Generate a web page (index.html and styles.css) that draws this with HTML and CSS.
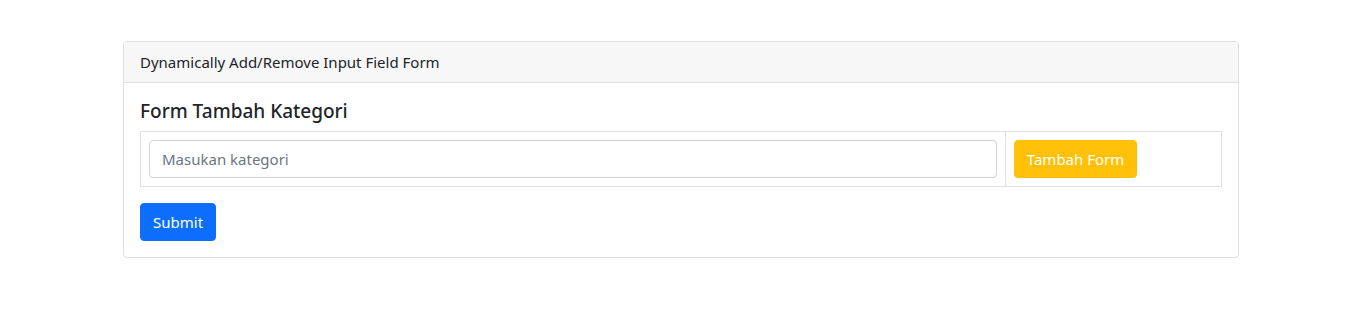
FILE: index.html
```html
<!DOCTYPE html>
<html lang="en">

<head>
    <meta charset="UTF-8">
    <meta name="viewport" content="width=device-width, initial-scale=1.0">
    <title>Dynamically Add/Remove Input Field</title>
    <link rel="stylesheet" href="styles.css">
</head>

<body>
    <div class="container">
        <div class="card">
            <div class="card-header">Dynamically Add/Remove Input Field Form</div>
            <div class="card-body">
                <h5 class="card-title">Form Tambah Kategori</h5>
                <form>
                    <table class="table-bordered">
                        <tr>
                            <td class="col-input"><input type="text" class="form-control" placeholder="Masukan kategori"></td>
                            <td><button type="button" class="btn btn-warning">Tambah Form</button></td>
                        </tr>
                    </table>
                    <button type="submit" class="btn btn-primary">Submit</button>
                </form>
            </div>
        </div>
    </div>
</body>

</html>
```

FILE: styles.css
```css
* {
    box-sizing: border-box;
}

body {
    margin: 0;
    font-family: "Noto Sans", "Open Sans", sans-serif;
    font-size: 16px;
    line-height: 1.5;
    color: #212529;
    background-color: #fff;
}

.container {
    max-width: 1140px;
    margin: 0 auto;
    padding: 41px 13px 0 11px;
}

.card {
    border: 1px solid #dfdfdf;
    border-radius: 4px;
    background-color: #fff;
}

.card-header {
    padding: 8px 16px;
    background-color: #f7f7f7;
    border-bottom: 1px solid #dfdfdf;
    border-radius: 3px 3px 0 0;
    font-size: 15px;
    line-height: 24px;
}

.card-body {
    padding: 16px;
}

.card-title {
    margin: 0 0 8px;
    font-size: 19px;
    font-weight: 500;
    line-height: 24px;
}

.table-bordered {
    width: 100%;
    border-collapse: collapse;
    margin-bottom: 16px;
}

.table-bordered td {
    border: 1px solid #dee2e6;
    padding: 8px;
}

.table-bordered .col-input {
    width: 80%;
}

.form-control {
    display: block;
    width: 100%;
    height: 38px;
    padding: 6px 12px;
    font-family: inherit;
    font-size: 15px;
    color: #212529;
    border: 1px solid #ced4da;
    border-radius: 4px;
}

.form-control::placeholder {
    color: #6c757d;
}

.btn {
    display: inline-block;
    height: 38px;
    padding: 6px 12px;
    font-family: inherit;
    font-size: 15px;
    line-height: 24px;
    color: #fff;
    border: 1px solid transparent;
    border-radius: 4px;
    cursor: pointer;
}

.btn-warning {
    background-color: #ffc107;
    border-color: #ffc107;
}

.btn-primary {
    background-color: #0d6efd;
    border-color: #0d6efd;
}
```
